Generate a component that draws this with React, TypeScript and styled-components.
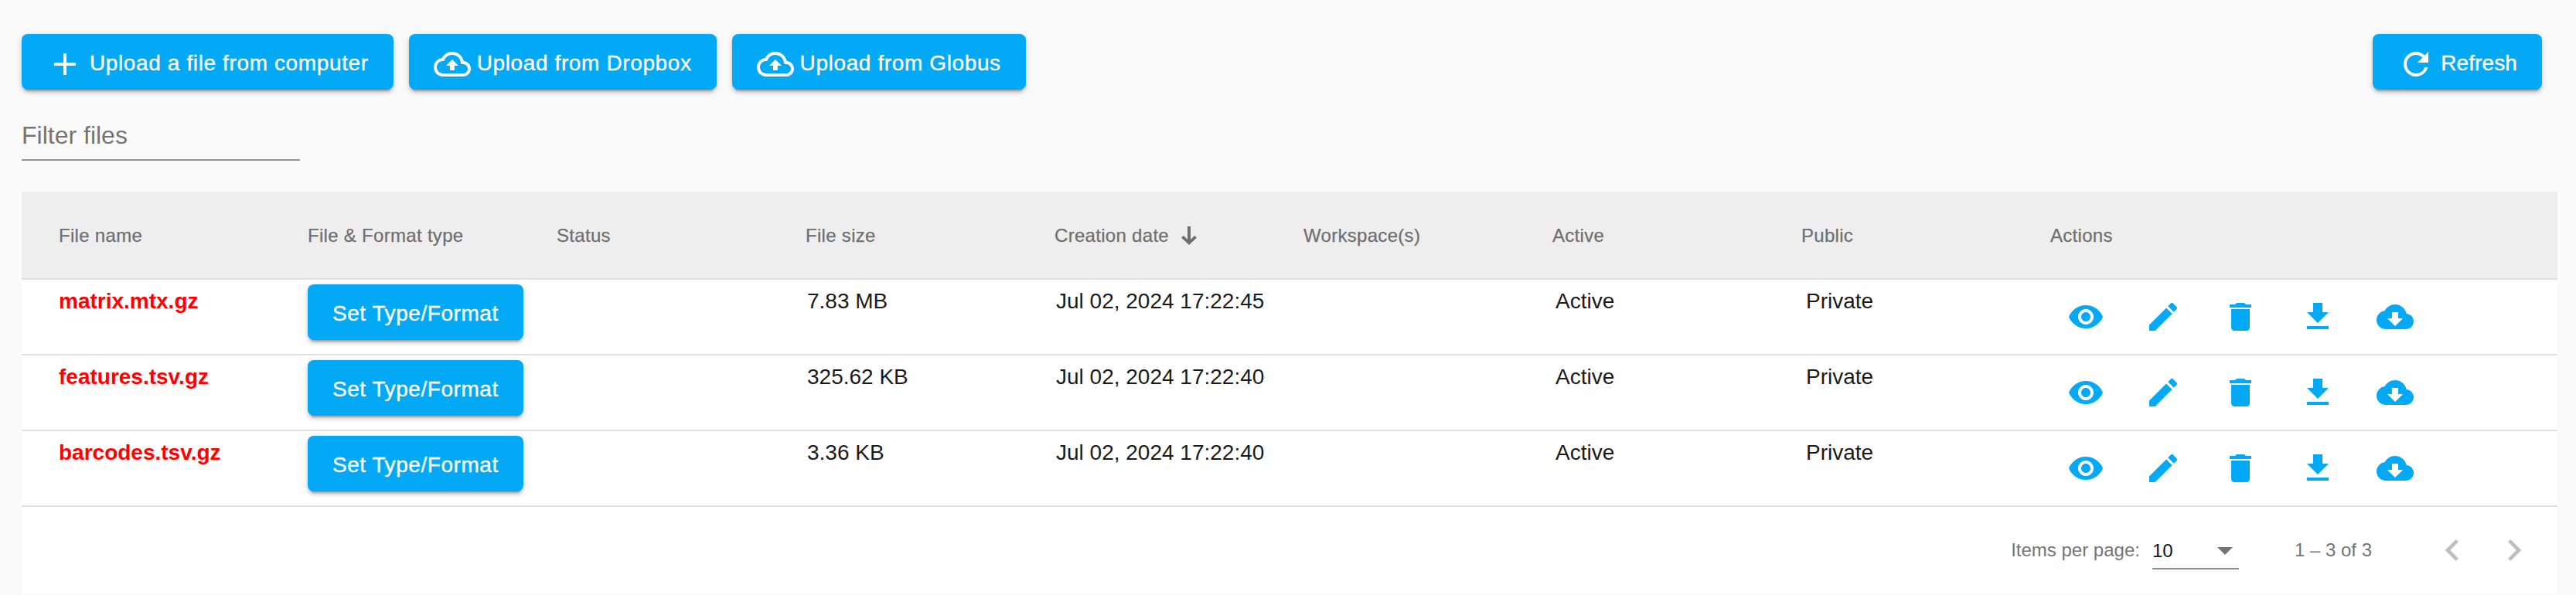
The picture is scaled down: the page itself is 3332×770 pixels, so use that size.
import { ReactNode } from 'react';
import styled, { createGlobalStyle } from 'styled-components';
import {
  MdAdd,
  MdChevronLeft,
  MdChevronRight,
  MdCloudDownload,
  MdDelete,
  MdEdit,
  MdFileDownload,
  MdOutlineCloudUpload,
  MdRefresh,
  MdVisibility,
} from 'react-icons/md';

const BLUE = '#03a9f4';

const GlobalStyle = createGlobalStyle`
  html, body {
    margin: 0;
    padding: 0;
    height: 770px;
    overflow: hidden;
    background: #fafafa;
    font-family: "Liberation Sans", Arial, sans-serif;
  }
`;

const Page = styled.div`
  padding: 44px 24px 0 28px;
`;

const Toolbar = styled.div`
  display: flex;
  align-items: center;
  gap: 20px;
  padding-right: 20px;
`;

const Button = styled.button`
  display: inline-flex;
  align-items: center;
  box-sizing: border-box;
  height: 72px;
  padding: 3px 32px 0;
  border: none;
  border-radius: 8px;
  background: ${BLUE};
  color: #fff;
  font-family: inherit;
  font-size: 28px;
  letter-spacing: 0.62px;
  -webkit-text-stroke: 0.35px #fff;
  white-space: nowrap;
  box-shadow: 0 6px 2px -4px rgba(0,0,0,.2), 0 4px 4px 0 rgba(0,0,0,.14), 0 2px 10px 0 rgba(0,0,0,.12);

  svg {
    width: 48px;
    height: 48px;
    margin: 2px 8px 0 0;
    flex-shrink: 0;
  }
`;

const RefreshButton = styled(Button)`
  margin-left: auto;
  letter-spacing: 0.1px;
`;

const SetTypeButton = styled(Button)`
  letter-spacing: 0.55px;
`;

const FilterField = styled.div`
  width: 360px;
  height: 50px;
  margin-top: 40px;
  border-bottom: 2px solid #949494;
  font-size: 32px;
  line-height: 38px;
  color: #757575;
`;

const Table = styled.div`
  margin-top: 40px;
  background: #fff;
`;

const Row = styled.div<{ $head?: boolean }>`
  display: grid;
  grid-template-columns: repeat(8, 322px) minmax(0, 1fr);
  height: ${({ $head }) => ($head ? '112px' : '96px')};
  padding-left: 48px;
  background: ${({ $head }) => ($head ? '#eeeeee' : '#fff')};
  border-bottom: 2px solid #e0e0e0;
`;

const HeadCell = styled.div`
  display: flex;
  align-items: center;
  gap: 16px;
  padding-top: 2px;
  font-size: 24px;
  letter-spacing: 0.3px;
  color: #6f6f6f;
  -webkit-text-stroke: 0.25px #6f6f6f;
`;

const Cell = styled.div<{ $inset?: number }>`
  padding: 12px 0 0 ${({ $inset }) => $inset ?? 2}px;
  font-size: 28px;
  line-height: 32px;
  color: #1a1a1a;
`;

const FileName = styled(Cell)`
  padding-left: 0;
  font-weight: 700;
  color: #ff0000;
`;

const ButtonCell = styled.div`
  padding-top: 6px;
`;

const ActionsCell = styled.div`
  display: flex;
  gap: 52px;
  padding: 24px 0 0 22px;
  color: ${BLUE};
  white-space: nowrap;

  svg {
    width: 48px;
    height: 48px;
    flex-shrink: 0;
  }
`;

const Paginator = styled.div`
  display: flex;
  align-items: center;
  justify-content: flex-end;
  height: 112px;
  padding-right: 16px;
  font-size: 24px;
  color: #757575;
`;

const PageSize = styled.div`
  display: flex;
  align-items: center;
  justify-content: space-between;
  box-sizing: border-box;
  width: 112px;
  height: 50px;
  margin: 0 72px 0 16px;
  padding: 8px 8px 4px 0;
  border-bottom: 2px solid #8c8c8c;
  color: #1a1a1a;
`;

const Caret = styled.span`
  width: 0;
  height: 0;
  border-left: 10px solid transparent;
  border-right: 10px solid transparent;
  border-top: 10px solid #757575;
`;

const Range = styled.span`
  margin-right: 64px;
`;

const PageButton = styled.div`
  display: flex;
  align-items: center;
  justify-content: center;
  width: 80px;
  height: 80px;
  color: rgba(0,0,0,.26);

  svg {
    width: 56px;
    height: 56px;
  }
`;

const columns = ['File name', 'File & Format type', 'Status', 'File size'];
const columnsAfterSort = ['Workspace(s)', 'Active', 'Public', 'Actions'];

const files = [
  { name: 'matrix.mtx.gz', size: '7.83 MB', date: 'Jul 02, 2024 17:22:45' },
  { name: 'features.tsv.gz', size: '325.62 KB', date: 'Jul 02, 2024 17:22:40' },
  { name: 'barcodes.tsv.gz', size: '3.36 KB', date: 'Jul 02, 2024 17:22:40' },
];

function SortArrow() {
  return (
    <svg width="20" height="24" viewBox="0 0 20 24" fill="currentColor">
      <path d="M8 0h4v17l5-5 3 2.500L10 24 0 14.500 3 12l5 5z" />
    </svg>
  );
}

function ToolButton({ icon, children }: { icon?: ReactNode; children: ReactNode }) {
  return (
    <Button>
      {icon}
      {children}
    </Button>
  );
}

export default function App() {
  return (
    <Page>
      <GlobalStyle />
      <Toolbar>
        <ToolButton icon={<MdAdd />}>Upload a file from computer</ToolButton>
        <ToolButton icon={<MdOutlineCloudUpload />}>Upload from Dropbox</ToolButton>
        <ToolButton icon={<MdOutlineCloudUpload />}>Upload from Globus</ToolButton>
        <RefreshButton><MdRefresh />Refresh</RefreshButton>
      </Toolbar>

      <FilterField>Filter files</FilterField>

      <Table>
        <Row $head>
          {columns.map(c => <HeadCell key={c}>{c}</HeadCell>)}
          <HeadCell>Creation date <SortArrow /></HeadCell>
          {columnsAfterSort.map(c => <HeadCell key={c}>{c}</HeadCell>)}
        </Row>

        {files.map(f => (
          <Row key={f.name}>
            <FileName>{f.name}</FileName>
            <ButtonCell><SetTypeButton>Set Type/Format</SetTypeButton></ButtonCell>
            <Cell />
            <Cell>{f.size}</Cell>
            <Cell>{f.date}</Cell>
            <Cell />
            <Cell $inset={4}>Active</Cell>
            <Cell $inset={6}>Private</Cell>
            <ActionsCell>
              <MdVisibility />
              <MdEdit />
              <MdDelete />
              <MdFileDownload />
              <MdCloudDownload />
            </ActionsCell>
          </Row>
        ))}

        <Paginator>
          Items per page:
          <PageSize>10<Caret /></PageSize>
          <Range>1 – 3 of 3</Range>
          <PageButton><MdChevronLeft /></PageButton>
          <PageButton><MdChevronRight /></PageButton>
        </Paginator>
      </Table>
    </Page>
  );
}
